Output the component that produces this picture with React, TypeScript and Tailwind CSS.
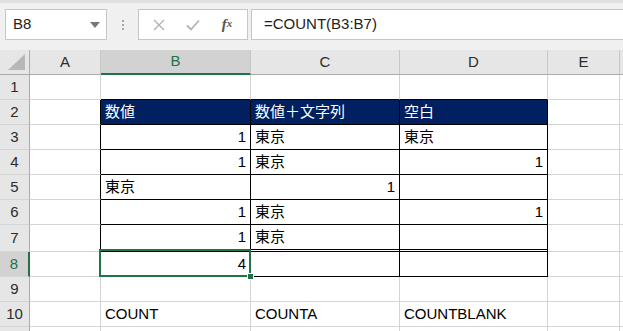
import React from "react";

const COLS = [30, 71, 150, 149, 148, 72];
const ROWH = [25, 25, 25, 25, 25, 25, 27, 25, 25, 25, 10];

type Cell = { t?: string; r?: boolean };

const data: Record<number, Cell[]> = {
  2: [{ t: "数値" }, { t: "数値＋文字列" }, { t: "空白" }],
  3: [{ t: "1", r: true }, { t: "東京" }, { t: "東京" }],
  4: [{ t: "1", r: true }, { t: "東京" }, { t: "1", r: true }],
  5: [{ t: "東京" }, { t: "1", r: true }, {}],
  6: [{ t: "1", r: true }, { t: "東京" }, { t: "1", r: true }],
  7: [{ t: "1", r: true }, { t: "東京" }, {}],
  8: [{ t: "4", r: true }, {}, {}],
  10: [{ t: "COUNT" }, { t: "COUNTA" }, { t: "COUNTBLANK" }],
};

const font = { fontFamily: '"Liberation Sans", "Noto Sans CJK JP", sans-serif' };

function Row({ n, h }: { n: number; h: number }) {
  const inTable = n >= 2 && n <= 8;
  const cells = data[n] || [{}, {}, {}];
  const heightCls: Record<number, string> = {
    25: "h-[25px]",
    27: "h-[27px]",
    10: "h-[10px]",
  };
  const sel = n === 8;
  return (
    <div className={`flex ${heightCls[h]}`}>
      <div
        className={`w-[30px] shrink-0 flex items-center justify-center border-b border-[#d4d4d4] text-[15px] ${
          sel
            ? "bg-[#d2d2d2] text-[#217346] border-r-2 border-r-[#217346]"
            : "bg-[#e6e6e6] text-[#2b2b2b] border-r border-r-[#ababab]"
        }`}
      >
        {n <= 10 ? n : ""}
      </div>
      <div
        className={`w-[71px] shrink-0 border-b border-b-[#d4d4d4] border-r ${
          inTable ? "border-r-black" : "border-r-[#d4d4d4]"
        }`}
      />
      {cells.map((c, i) => {
        const w = i === 0 ? "w-[150px]" : i === 1 ? "w-[149px]" : "w-[148px]";
        let b = "border-r border-r-[#d4d4d4] border-b border-b-[#d4d4d4]";
        if (inTable) {
          b =
            n === 7
              ? "border-r border-r-black border-b-[3px] border-double border-b-black"
              : "border-r border-r-black border-b border-b-black";
          if (n === 7) b = "border-r border-solid border-r-black border-b-[3px] border-b-black [border-bottom-style:double]";
        } else if (n === 1) {
          b = "border-r border-r-[#d4d4d4] border-b border-b-black";
        }
        const bg = n === 2 ? "bg-[#002060] text-white" : "text-black";
        return (
          <div
            key={i}
            className={`${w} shrink-0 flex items-center px-[4px] text-[15px] ${b} ${bg} ${
              c.r ? "justify-end" : "justify-start"
            }`}
          >
            {c.t}
          </div>
        );
      })}
      <div className="w-[72px] shrink-0 border-r border-b border-[#d4d4d4]" />
      <div className="flex-1 border-b border-[#d4d4d4]" />
    </div>
  );
}

export default function App() {
  return (
    <div className="relative w-[623px] h-[331px] overflow-hidden bg-white" style={font}>
      {/* toolbar */}
      <div className="h-[50px] bg-[#f0f0f0] border-t-[3px] border-[#e0e0e0] flex items-start pt-[6px] pl-[5px]">
        <div className="w-[102px] h-[31px] bg-white border border-[#c6c6c6] flex items-center pl-[7px] pr-[6px] text-[15px] text-[#222]">
          <span className="flex-1">B8</span>
          <svg width="10" height="6" viewBox="0 0 10 6">
            <path d="M0 0 L10 0 L5 6 Z" fill="#777" />
          </svg>
        </div>
        <div className="w-[31px] h-[31px] flex flex-col items-center justify-center gap-[2px]">
          <div className="w-[2px] h-[2px] bg-[#a8a8a8]" />
          <div className="w-[2px] h-[2px] bg-[#a8a8a8]" />
          <div className="w-[2px] h-[2px] bg-[#a8a8a8]" />
        </div>
        <div className="w-[110px] h-[31px] bg-white border border-[#c6c6c6] flex items-center">
          <div className="w-[40px] flex justify-center">
            <svg width="12" height="12" viewBox="0 0 12 12">
              <path d="M1 1 L11 11 M11 1 L1 11" stroke="#b3b3b3" strokeWidth="1.4" />
            </svg>
          </div>
          <div className="w-[28px] flex justify-center">
            <svg width="14" height="12" viewBox="0 0 14 12">
              <path d="M1 6.5 L5 10.5 L13 1.5" stroke="#b3b3b3" strokeWidth="1.8" fill="none" />
            </svg>
          </div>
          <div
            className="flex-1 flex justify-center text-[15px] italic text-[#555] font-bold"
            style={{ fontFamily: '"Liberation Serif", serif' }}
          >
            f<span className="text-[11px] relative top-[2px]">x</span>
          </div>
        </div>
        <div className="ml-[3px] flex-1 h-[31px] bg-white border border-r-0 border-[#c6c6c6] flex items-center pl-[12px] text-[15px] text-[#222]">
          =COUNT(B3:B7)
        </div>
      </div>

      {/* column header */}
      <div className="flex h-[25px] bg-[#e6e6e6] text-[15px] text-[#2b2b2b]">
        <div className="w-[30px] shrink-0 relative border-r border-r-[#ababab] border-b border-b-[#ababab]">
          <svg className="absolute left-0 top-0" width="30" height="24" viewBox="0 0 30 24">
            <path d="M8 20 L25 20 L25 4 Z" fill="#b7b7b7" />
          </svg>
        </div>
        <div className="w-[71px] shrink-0 flex items-center justify-center border-r border-r-[#c6c6c6] border-b border-b-[#ababab]">
          A
        </div>
        <div className="w-[150px] shrink-0 flex items-center justify-center bg-[#d2d2d2] text-[#217346] border-r border-r-[#c6c6c6] border-b-2 border-b-[#217346]">
          B
        </div>
        <div className="w-[149px] shrink-0 flex items-center justify-center border-r border-r-[#c6c6c6] border-b border-b-[#ababab]">
          C
        </div>
        <div className="w-[148px] shrink-0 flex items-center justify-center border-r border-r-[#c6c6c6] border-b border-b-[#ababab]">
          D
        </div>
        <div className="w-[72px] shrink-0 flex items-center justify-center border-r border-r-[#c6c6c6] border-b border-b-[#ababab]">
          E
        </div>
        <div className="flex-1 border-b border-b-[#ababab]" />
      </div>

      {ROWH.map((h, i) => (
        <Row key={i} n={i + 1} h={h} />
      ))}

      {/* selection */}
      <div className="absolute left-[99px] top-[249px] w-[152px] h-[28px] border-2 border-[#217346] pointer-events-none" />
      <div className="absolute left-[247px] top-[273px] w-[7px] h-[7px] bg-[#217346] border border-white" />
    </div>
  );
}
